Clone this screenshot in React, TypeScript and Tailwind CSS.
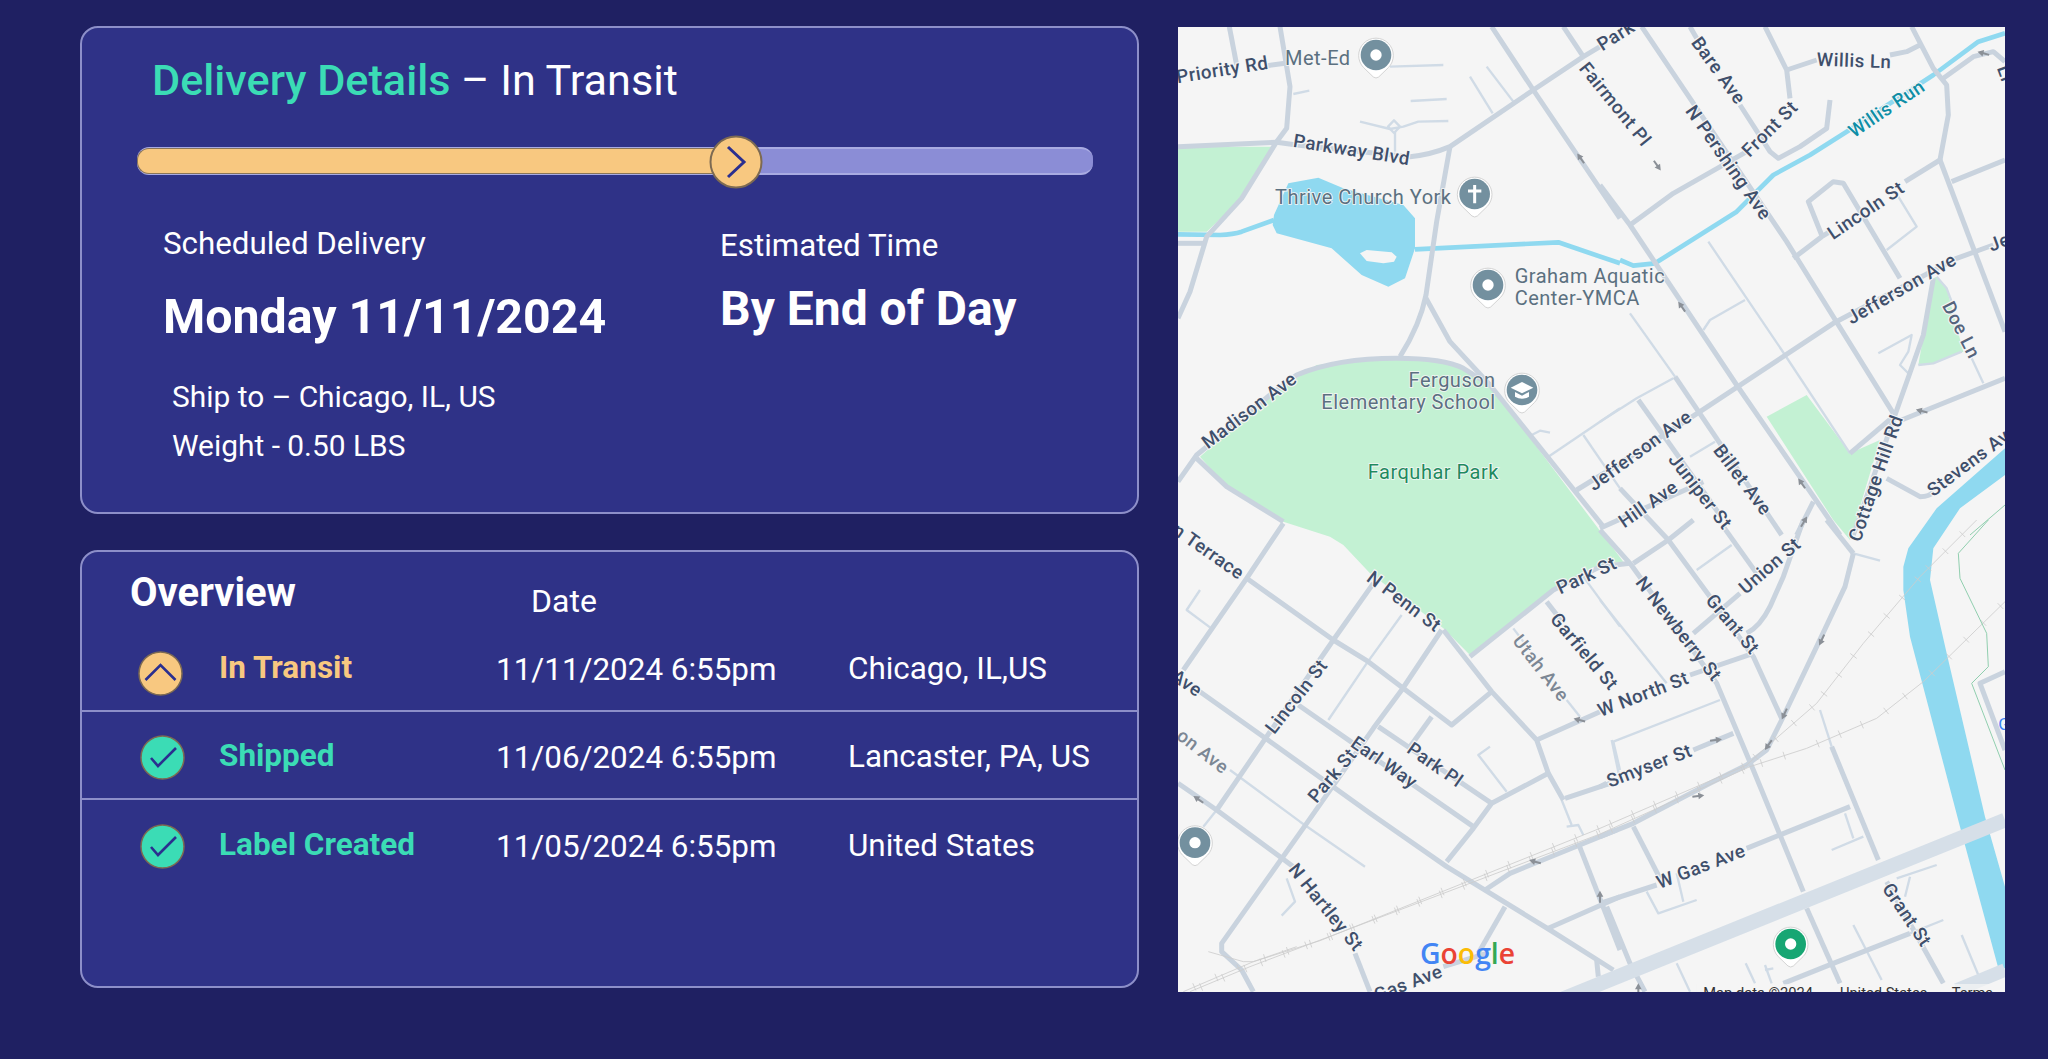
import React from "react";

type P = [number, number];
const Z3: P = [0, 0];
const Z4: P = [1290, 0];
const Z5: P = [0, 1515];
const Z6: P = [1290, 1515];

const thin: [P, string[]][] = [
  [Z3, ["M660 155L820 150", "M950 155L1030 260", "M900 185L968 295", "M722 258L830 252", "M570 320L660 342L700 335L745 320L835 318", "M675 350L675 410", "M370 237L418 227", "M1085 1260L1110 1247L1140 1253", "M1135 1325L1350 1180", "M1240 1260L1350 1420", "M672 316L690 335L672 354L654 335Z"]],
  [Z4, ["M325 680L545 1005L750 1315", "M90 895L225 1085", "M435 855L330 915L310 945", "M895 545L950 635L860 705", "M835 1015L935 960L925 1010L900 1050L930 1080", "M955 1050L1000 1045L1085 1010", "M1115 1030L1150 1105", "M0 1220L110 1150L220 1090", "M270 1325L345 1280", "M1010 785L1040 820L1055 860"]],
  [Z5, ["M695 285L590 430L475 600", "M180 750L390 905L585 1040", "M90 210L50 270L120 322", "M350 1075L375 1145L335 1187", "M960 680L925 705L1010 815", "M1240 170L1350 320", "M1030 325L1060 365", "M1190 540L1230 590", "M1325 660L1350 780", "M140 870L100 920", "M1175 840L1205 915", "M1190 920L1225 915L1240 945"]],
  [Z6, ["M360 540L40 665L60 750", "M0 240L200 490", "M290 150L395 75", "M660 570L695 680", "M735 880L760 955", "M695 990L790 950", "M140 1115L175 1180L290 1140", "M230 1060L250 1145", "M890 1075L1010 1035", "M930 1070L915 1130", "M760 1215L845 1380", "M1085 1245L1135 1365", "M437 1330L465 1390", "M495 1335L515 1390", "M495 1350L520 1345", "M760 100L840 122", "M230 1330L270 1415", "M930 1240L1030 1200"]],
];

const roads: [P, string[]][] = [
  [Z3, ["M178 35L200 150", "M330 35L360 215L350 340L320 380L215 550L110 665L60 830L24 910", "M24 395L320 382L380 390L720 425Q780 420 840 395L1090 225L1240 125L1290 95", "M290 152L345 145", "M965 35L1090 225L1350 610", "M1180 35L1240 125", "M840 395L800 620L768 840Q750 930 690 1025", "M768 850L840 980L960 1110L1300 1535", "M24 1400L80 1320L300 1140L380 1080Q500 1030 680 1030Q820 1030 880 1060L960 1110", "M24 685L100 685", "M80 1330L170 1415L340 1520", "M1220 1425L1350 1345"]],
  [Z4, ["M125 35L560 680L880 1195", "M0 510L90 630L410 1110L720 1560", "M270 35L290 70", "M420 270L510 410L535 430L600 395L680 340L690 255", "M495 35L560 165L570 250", "M560 165L650 135", "M870 120L920 110L960 90", "M935 35L1000 160L1040 210L1045 300L1020 435", "M1030 190L1120 125L1180 110L1215 140", "M90 630L220 535L440 410", "M1020 435L915 500", "M580 730L665 665L690 650", "M665 660L625 560L700 500L730 505L900 790", "M1020 435L1215 950", "M1055 500L1215 435", "M60 1345L300 1190L700 925L1070 730L1180 690", "M1000 790L970 960L885 1200L760 1560", "M880 1205L750 1315", "M905 1215L1215 1090", "M860 1390L960 1445Q990 1445 1000 1430", "M115 1155L360 1500", "M225 1085L545 1560", "M640 1460L590 1560", "M0 1540L310 1400", "M60 1420L205 1575"]],
  [Z5, ["M340 10L230 175L40 450", "M230 175L490 360L595 425L845 615L965 515", "M610 190L490 360L290 650L140 870", "M815 330L695 510L610 625L410 910L155 1270L155 1295L215 1350L250 1415", "M820 330L965 515L1100 660L1135 760L1180 840", "M1100 660L1290 575", "M1185 835L1320 790", "M1135 760L965 850L910 925L830 1025", "M385 555L550 670L910 920", "M625 620L965 850", "M785 590L720 680", "M90 515L280 650L600 880L830 1040L1140 1230L1330 1350", "M24 790L140 870L330 1010L370 1040", "M555 1300L600 1415", "M900 410L1150 210L1290 140L1380 130", "M945 1110L1020 1060L1340 930", "M1005 1160L925 1300", "M1135 1225L1350 1130", "M1225 970L1350 1290", "M820 1340L950 1300", "M1130 245L1180 310", "M1280 1320L1285 1370"]],
  [Z6, ["M0 30L90 130L350 490L460 750L610 1115", "M620 1165L720 1390", "M100 130L205 60L280 0", "M205 60L330 230L460 410L545 595", "M280 340L420 220", "M370 20L470 160", "M440 340Q480 320 510 260L550 170L610 0", "M760 100L735 200L650 380L545 600L500 690L440 735L330 790L100 910L0 950", "M680 0L760 100", "M460 400L270 465", "M400 640L280 690", "M20 790L0 800", "M100 920L185 1085", "M0 1150L170 1095", "M440 985L750 860", "M695 680L835 1020", "M860 1085L1030 1390", "M550 1390L700 1330L930 1240", "M20 1160L90 1330L135 1415", "M1215 455L1140 490L1215 690"]],
];

const ticks = (pts: P[], step = 72, len = 12) => {
  let d = "M" + pts.map((p) => p.join(" ")).join("L");
  for (let i = 0; i < pts.length - 1; i++) {
    const [a, b] = [pts[i], pts[i + 1]];
    const L = Math.hypot(b[0] - a[0], b[1] - a[1]);
    const nx = -(b[1] - a[1]) / L;
    const ny = (b[0] - a[0]) / L;
    for (let s = step / 2; s < L; s += step) {
      const x = a[0] + ((b[0] - a[0]) * s) / L;
      const y = a[1] + ((b[1] - a[1]) * s) / L;
      d += `M${x - nx * len} ${y - ny * len}L${x + nx * len} ${y + ny * len}`;
    }
  }
  return d;
};

const arrows: [P, number, number, number][] = [
  [Z3, 1232, 430, -125], [Z4, 172, 452, 55], [Z4, 1150, 115, 195], [Z4, 245, 875, -125], [Z4, 965, 1188, 195], [Z4, 605, 1405, -125], [Z4, 612, 1520, -60],
  [Z5, 1228, 600, 195], [Z5, 85, 838, -145], [Z5, 1095, 1025, 195], [Z5, 1290, 1130, -90], [Z6, 665, 360, 115], [Z6, 553, 582, 115], [Z6, 505, 675, 125], [Z6, 348, 660, -8], [Z6, 295, 828, -8], [Z6, 115, 1408, -90],
];

type L = [P, string, number, number, number, string?];
const labels: L[] = [
  [Z3, "Priority Rd", 157, 165, -9],
  [Z3, "Parkway Blvd", 545, 405, 9],
  [Z3, "Madison Ave", 238, 1187, -37],
  [Z3, "Fairmont Pl", 1335, 268, 51],
  [Z3, "Park", 1338, 62, -32],
  [Z4, "Bare Ave", 355, 167, 54],
  [Z4, "Willis Ln", 762, 138, 2],
  [Z4, "Willis Run", 860, 282, -34, "#0e8ea6"],
  [Z4, "Front St", 510, 342, -45],
  [Z4, "N Pershing Ave", 385, 443, 55],
  [Z4, "Lincoln St", 798, 587, -34],
  [Z4, "Li", 1215, 175, 70],
  [Z4, "Jefferson Ave", 905, 822, -30],
  [Z4, "Je", 1198, 682, -20],
  [Z4, "Doe Ln", 1083, 945, 63, "#55647c"],
  [Z4, "Stevens Ave", 1118, 1335, -37],
  [Z4, "Cottage Hill Rd", 828, 1390, -71],
  [Z4, "Jefferson Ave", 120, 1307, -36],
  [Z4, "Hill Ave", 145, 1468, -35],
  [Z4, "Juniper St", 300, 1430, 52],
  [Z4, "Billet Ave", 427, 1395, 53],
  [Z5, "n Terrace", 115, 95, 35],
  [Z5, "N Penn St", 702, 245, 37],
  [Z5, "Park St", 1250, 167, -25],
  [Z5, "Garfield St", 1242, 395, 50],
  [Z5, "Utah Ave", 1112, 445, 52, "#7c8794"],
  [Z6, "W North St", 130, 523, -21],
  [Z5, "Lincoln St", 380, 530, -52],
  [Z5, "Ave", 50, 490, 35],
  [Z5, "on Ave", 98, 695, 38, "#7c8794"],
  [Z5, "Park St", 487, 767, -50],
  [Z5, "Earl Way", 642, 728, 35],
  [Z5, "Park Pl", 795, 735, 35],
  [Z5, "N Hartley St", 467, 1162, 51],
  [Z5, "Gas Ave", 715, 1390, -21],
  [Z6, "Smyser St", 148, 738, -21],
  [Z6, "W Gas Ave", 303, 1040, -21],
  [Z6, "N Newberry St", 235, 327, 52],
  [Z6, "Grant St", 397, 313, 50],
  [Z6, "Union St", 510, 138, -41],
  [Z6, "Grant St", 920, 1185, 56],
];

const at = (p: P) => `translate(${p[0]} ${p[1]})`;

function Pin({ x, y, color = "#73909f", kind = "dot" }: { x: number; y: number; color?: string; kind?: string }) {
  return (
    <g transform={`translate(${x} ${y})`}>
      <path d="M-37 38A52 52 0 1 1 37 38L8 66Q0 72 -8 66Z" fill="#ffffff" stroke="#d4d4d4" strokeWidth="3" />
      <circle r="46" fill={color} />
      {kind === "dot" && <circle r="17" fill="#ffffff" />}
      {kind === "cross" && <path d="M0 -27V28M-20 -9H20" stroke="#ffffff" strokeWidth="9" />}
      {kind === "cap" && (
        <g fill="#ffffff">
          <path d="M0 -24L34 -7L0 10L-34 -7Z" />
          <path d="M-21 6L0 17L21 6V20Q0 32 -21 20Z" />
        </g>
      )}
    </g>
  );
}

function Poi({ x, y, children, anchor = "start", color = "#5b7080" }: { x: number; y: number; children: string; anchor?: "start" | "end" | "middle"; color?: string }) {
  return (
    <text x={x} y={y} textAnchor={anchor} dominantBaseline="central" fontFamily="Roboto, sans-serif" fontSize="60" letterSpacing="1.5" fill={color} stroke="#f5f5f5" strokeWidth="5" paintOrder="stroke">
      {children}
    </text>
  );
}

function MapArt() {
  return (
    <svg viewBox="24 36 2481 2895" className="mt-[1px] block h-[965px] w-[827px]">
      <rect x="24" y="36" width="2481" height="2895" fill="#f5f5f5" />
      <g fill="#c3f1d3">
        <path d="M24 395L305 395L215 550L110 650L24 650Z" />
        <path d="M90 1325L300 1140L440 1050L680 1030L860 1045L960 1110L1360 1640L1290 1648L1150 1725L900 1920L820 1840L600 1675L520 1590L480 1565L340 1520L170 1415Z" />
        <g transform={at(Z4)}>
          <path d="M500 1205L620 1140L750 1315L840 1275L750 1575L700 1515Z" />
          <path d="M1010 785L1040 820L1090 1010L1000 1045L955 1050L1000 790Z" />
        </g>
      </g>
      <g fill="#8fd9f0">
        <path d="M312 600L355 505L445 488L520 520L700 570L735 610L735 700L705 790L655 815L575 780L485 700L320 655L308 630Z" />
        <path d="M570 715L590 705L665 712L680 725L672 740L640 745L590 738Z" fill="#f5f5f5" />
        <g transform={at(Z6)}>
          <path d="M1215 -215L1010 -35L925 85L910 140L910 210L930 350L1080 920L1195 1345L1215 1345L1215 1100L1155 890L1040 400L990 180L1000 85L1080 -35L1215 -135Z" />
        </g>
      </g>
      <g fill="none" stroke="#8fd9f0" strokeWidth="14" strokeLinejoin="round">
        <path d="M24 658L150 660Q190 658 215 650L312 615" />
        <path d="M735 703L1165 682L1350 745" />
        <path transform={at(Z4)} d="M60 735L100 752L165 745L410 590L520 480L630 420L740 350L1000 180L1135 80L1215 55" />
      </g>
      <g fill="none" stroke="#d0dbe6" strokeWidth="7" strokeLinejoin="round">
        {thin.map(([p, ds], i) => (
          <g key={i} transform={at(p)}>
            {ds.map((d, j) => (
              <path key={j} d={d} />
            ))}
          </g>
        ))}
      </g>
      <g fill="none" stroke="#c9d3de" strokeWidth="15" strokeLinejoin="round">
        {roads.map(([p, ds], i) => (
          <g key={i} transform={at(p)}>
            {ds.map((d, j) => (
              <path key={j} d={d} />
            ))}
          </g>
        ))}
      </g>
      <g transform={at(Z6)} fill="none">
        <path d="M-120 1440L1215 900" stroke="#d6dfe8" strokeWidth="44" />
        <path d="M1070 1410L1215 1350" stroke="#d6dfe8" strokeWidth="40" />
        <path d={ticks([[0, 925], [440, 735], [500, 680], [650, 550], [790, 370], [960, 170], [1130, 0]])} stroke="#cdcdcd" strokeWidth="2.5" />
        <path d={ticks([[0, 942], [450, 740], [620, 685], [830, 595], [970, 485], [1215, 245]])} stroke="#cdcdcd" strokeWidth="2.5" />
        <path d="M1165 0L1075 100L1080 175L1160 340L1165 440L1115 490L1215 750" stroke="#7cc6a0" strokeWidth="2.5" />
        <path d="M1215 -45L1110 45" stroke="#7cc6a0" strokeWidth="2.5" />
      </g>
      <g transform={at(Z5)} fill="none" stroke="#cdcdcd" strokeWidth="2.5">
        <path d={ticks([[40, 1415], [250, 1325], [450, 1262], [1290, 925]])} />
        <path d={ticks([[60, 1415], [240, 1340], [1290, 942]])} />
        <path d="M115 1295L220 1325L250 1325L380 1280" />
      </g>
      <g fill="#8b9097">
        {arrows.map(([p, x, y, a], i) => (
          <g key={i} transform={`${at(p)} translate(${x} ${y}) rotate(${a})`}>
            <path d="M-18 -3L0 -3L0 -10L18 0L0 10L0 3L-18 3Z" />
          </g>
        ))}
      </g>
      <g fontFamily="Roboto, sans-serif" fontSize="56" letterSpacing="1.5" fontWeight="500" textAnchor="middle" stroke="#f5f5f5" strokeWidth="7" paintOrder="stroke">
        {labels.map(([p, t, x, y, a, c], i) => (
          <text key={i} transform={`${at(p)} translate(${x} ${y}) rotate(${a})`} dominantBaseline="central" fill={c || "#3f4f6b"}>
            {t}
          </text>
        ))}
      </g>
      <Poi x={345} y={130}>Met-Ed</Poi>
      <Poi x={315} y={547}>Thrive Church York</Poi>
      <Poi x={1034} y={782}>Graham Aquatic</Poi>
      <Poi x={1034} y={848}>Center-YMCA</Poi>
      <Poi x={977} y={1095} anchor="end">Ferguson</Poi>
      <Poi x={977} y={1160} anchor="end">Elementary School</Poi>
      <Poi x={790} y={1372} anchor="middle" color="#1f8a5f">Farquhar Park</Poi>
      <Pin x={618} y={120} />
      <Pin x={914} y={537} kind="cross" />
      <Pin x={954} y={810} />
      <Pin x={1056} y={1125} kind="cap" />
      <g transform={at(Z5)}>
        <Pin x={75} y={968} />
      </g>
      <g transform={at(Z6)}>
        <Pin x={572} y={1272} color="#17a673" />
        <rect x="290" y="1392" width="925" height="30" fill="#f5f5f5" fillOpacity="0.7" />
        <g fontFamily="Roboto, sans-serif" fontSize="44" fill="#333333">
          <text x="310" y="1434">Map data ©2024</text>
          <text x="720" y="1434">United States</text>
          <text x="1055" y="1434">Terms</text>
        </g>
        <text x="1195" y="630" fontFamily="Roboto, sans-serif" fontSize="52" fill="#3b82f6">G</text>
      </g>
      <g transform={at(Z5)}>
        <text x="750" y="1332" fontFamily="'Open Sans', sans-serif" fontSize="85" fontWeight="600">
          <tspan fill="#4285f4">G</tspan>
          <tspan fill="#ea4335">o</tspan>
          <tspan fill="#fbbc05">o</tspan>
          <tspan fill="#4285f4">g</tspan>
          <tspan fill="#34a853">l</tspan>
          <tspan fill="#ea4335">e</tspan>
        </text>
      </g>
    </svg>
  );
}

function Badge({ color, kind }: { color: string; kind: "up" | "check" }) {
  return (
    <svg viewBox="0 0 45 45" className="block h-[45px] w-[45px]">
      <circle cx="22.5" cy="22.5" r="21.5" fill={color} stroke="#7d6a52" strokeWidth="1.5" />
      {kind === "up" ? (
        <path d="M7.5 29L22.5 14L37.5 29" fill="none" stroke="#2b2f8f" strokeWidth="2.6" />
      ) : (
        <path d="M11 23L18 31L36 13" fill="none" stroke="#2b2f8f" strokeWidth="2.6" />
      )}
    </svg>
  );
}

const rows = [
  { name: "In Transit", date: "11/11/2024 6:55pm", place: "Chicago, IL,US", color: "text-[#f8c880]", badge: "#f8c880", kind: "up" as const, border: true, box: "ml-[56px] mt-[12px]" },
  { name: "Shipped", date: "11/06/2024 6:55pm", place: "Lancaster, PA, US", color: "text-[#3bdcb5]", badge: "#3bdcb5", kind: "check" as const, border: true, box: "ml-[58px] mt-[4px]" },
  { name: "Label Created", date: "11/05/2024 6:55pm", place: "United States", color: "text-[#3bdcb5]", badge: "#3bdcb5", kind: "check" as const, border: false, box: "ml-[58px] mt-[4px]" },
];

export default function App() {
  return (
    <div className="min-h-[1059px] w-[2048px] overflow-hidden bg-[#1f2062] font-['Roboto',sans-serif] text-white">
      <div className="flex gap-[39px] pl-[80px] pt-[26px]">
        <div className="flex w-[1059px] flex-col gap-[36px]">
          <section className="h-[488px] rounded-[18px] border-2 border-[#8d8fc9] bg-[#2f3287]">
            <h1 className="ml-[70px] mt-[28px] text-[43.2px] leading-[50px]">
              <span className="font-medium text-[#3bdcb5]">Delivery Details</span> – In Transit
            </h1>
            <div className="relative ml-[55px] mt-[41px] h-[28px] w-[956px] rounded-[12px] border-b-2 border-t-2 border-[#a9abe2] bg-[#8b8dd6]">
              <div className="absolute -bottom-[1px] -top-[1px] left-0 w-[590px] rounded-l-[12px] border-y border-l border-[#8a7558] bg-[#f8c880]" />
              <svg viewBox="0 0 54 54" className="absolute -top-[14px] left-[572px] block h-[54px] w-[54px]">
                <circle cx="27" cy="27" r="25.5" fill="#f8c880" stroke="#7d6a52" strokeWidth="2" />
                <path d="M19 12L35 27L19 42" fill="none" stroke="#2b2f8f" strokeWidth="3" />
              </svg>
            </div>
            <div className="mt-[51px] flex">
              <div className="ml-[81px] w-[557px]">
                <p className="text-[31.3px] leading-[36px]">Scheduled Delivery</p>
                <p className="mt-[27px] text-[48.3px] font-bold leading-[56px]">Monday 11/11/2024</p>
                <p className="ml-[9px] mt-[27px] text-[29.9px] leading-[49px]">Ship to – Chicago, IL, US</p>
                <p className="ml-[9px] text-[29.9px] leading-[49px]">Weight - 0.50 LBS</p>
              </div>
              <div className="pt-[2px]">
                <p className="text-[31.3px] leading-[36px]">Estimated Time</p>
                <p className="mt-[17px] text-[48px] font-bold leading-[56px]">By End of Day</p>
              </div>
            </div>
          </section>
          <section className="h-[438px] rounded-[18px] border-2 border-[#8d8fc9] bg-[#2f3287]">
            <div className="flex h-[72px] items-start">
              <h2 className="ml-[48px] mt-[19px] w-[401px] text-[40px] font-bold leading-[44px]">Overview</h2>
              <p className="mt-[31px] text-[32px] leading-[36px]">Date</p>
            </div>
            {rows.map((r) => (
              <div key={r.name} className={`flex h-[88px] items-center ${r.border ? "border-b-2 border-[#8d8fc9]" : ""}`}>
                <div className="w-[137px]">
                  <div className={r.box}>
                    <Badge color={r.badge} kind={r.kind} />
                  </div>
                </div>
                <p className={`w-[277px] pt-[2px] text-[31.5px] font-bold leading-[36px] ${r.color}`}>{r.name}</p>
                <p className="w-[352px] pt-[5px] text-[31.4px] leading-[36px]">{r.date}</p>
                <p className="pt-[3px] text-[31.4px] leading-[36px]">{r.place}</p>
              </div>
            ))}
          </section>
        </div>
        <MapArt />
      </div>
    </div>
  );
}
